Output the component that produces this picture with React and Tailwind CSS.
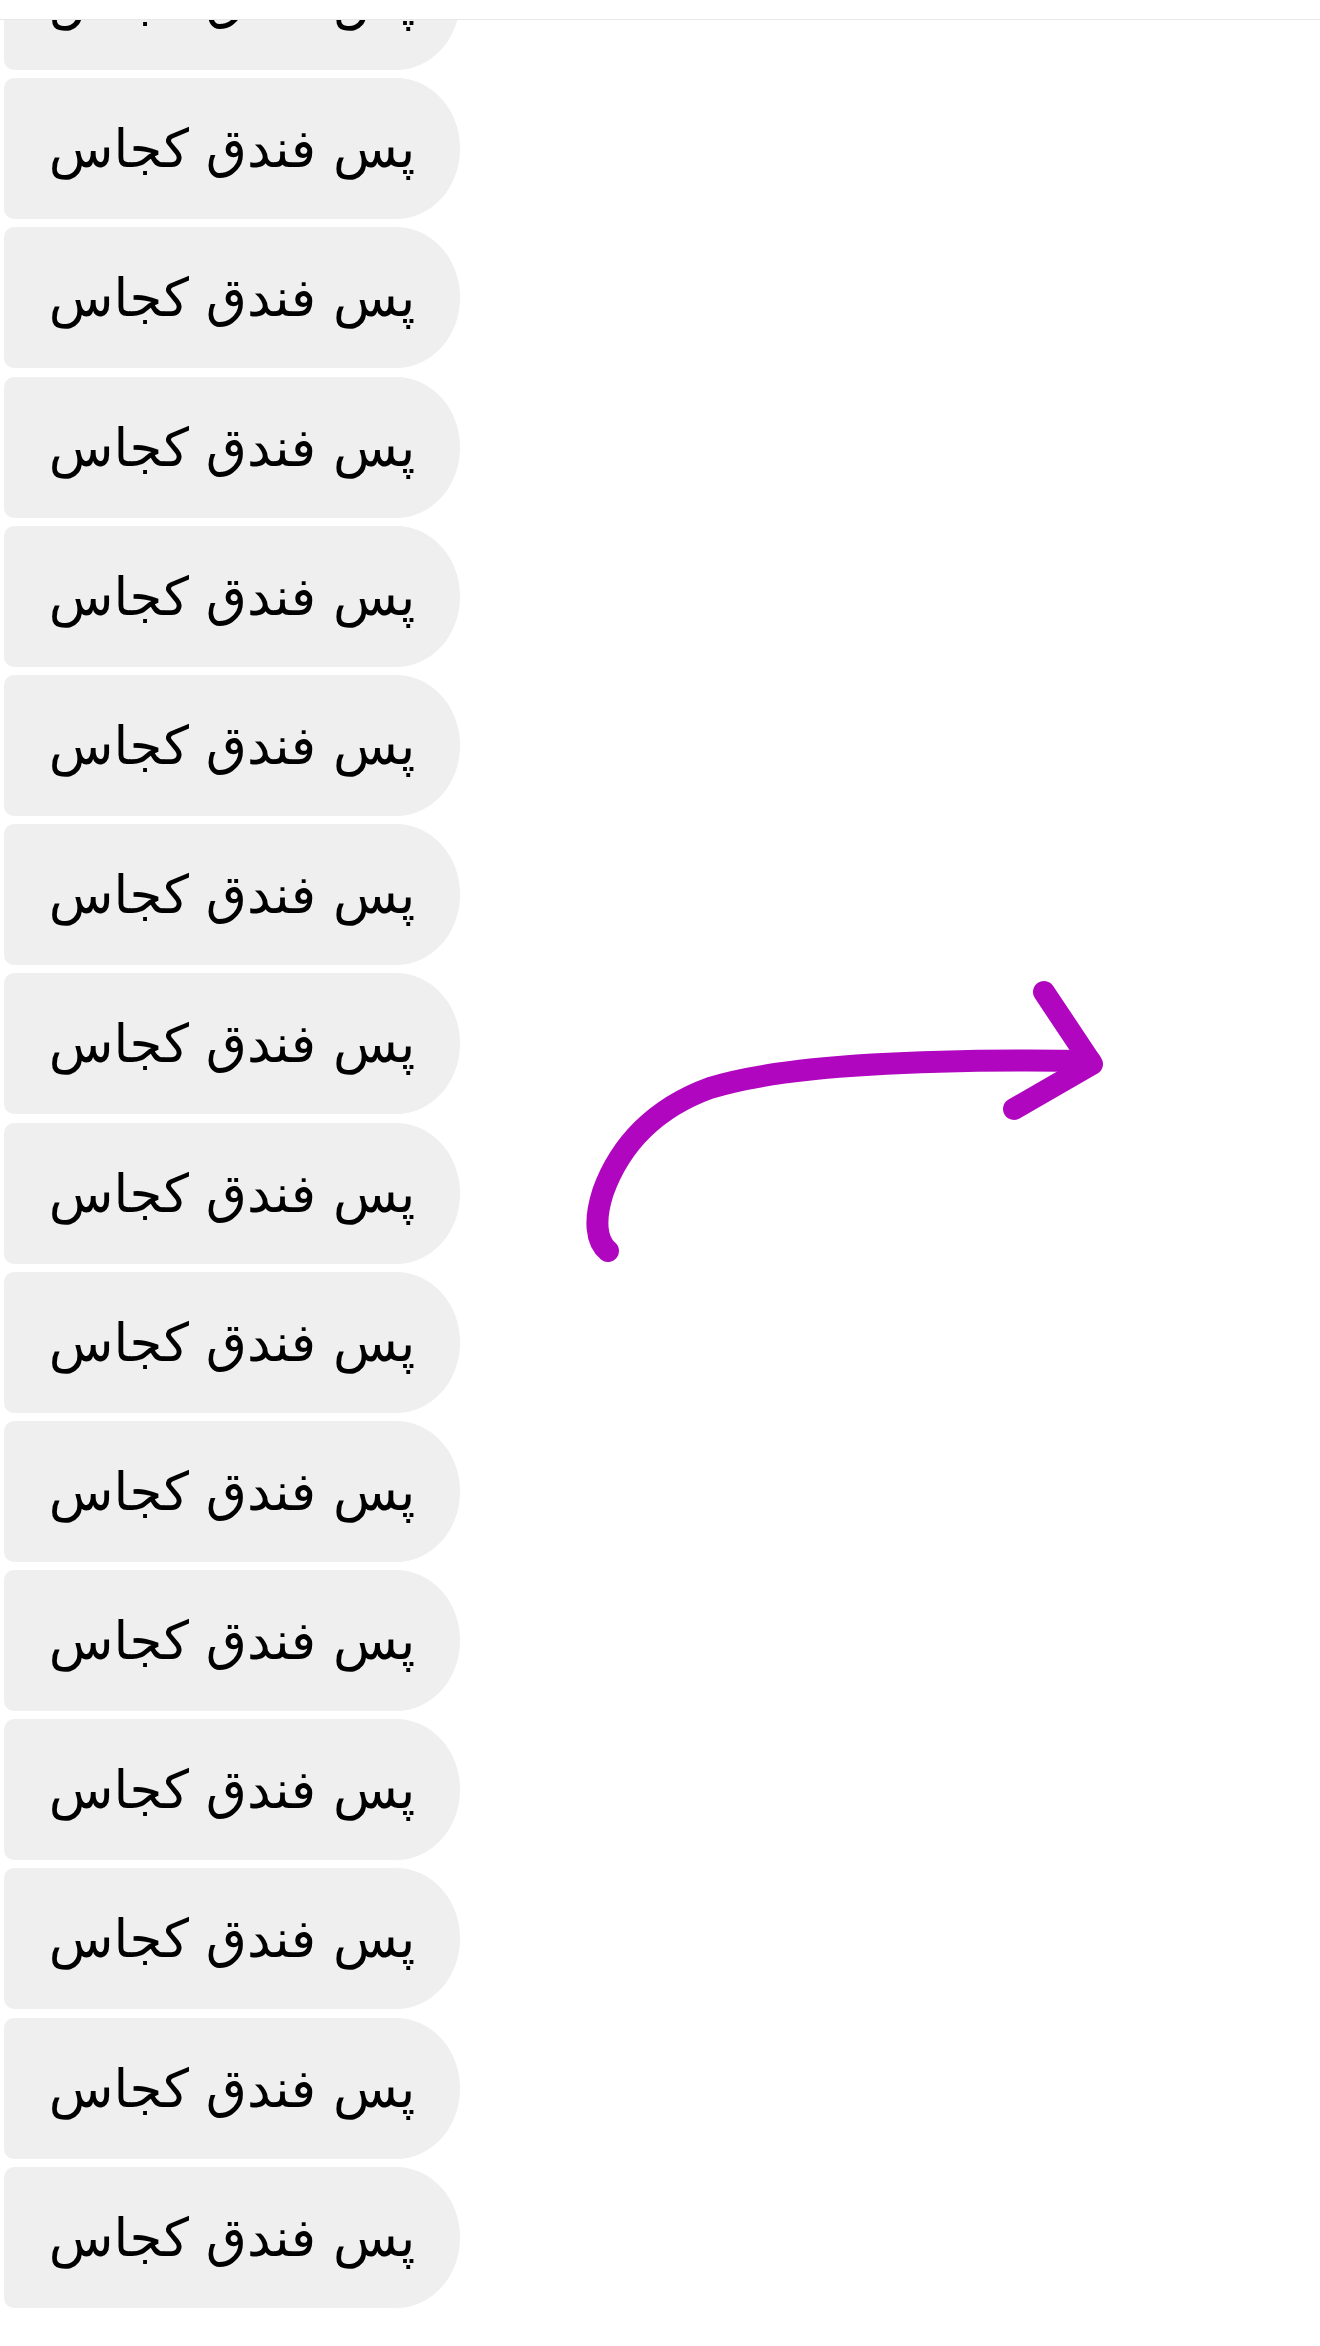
const items = Array.from({ length: 15 }, (_, i) => i);

function Bubble({ children }) {
  return (
    <div className="h-[141px] w-[456px] shrink-0 bg-[#efefef] rounded-l-[10px] rounded-tr-[64px_70px] rounded-br-[64px_70px] flex items-center justify-center">
      <span dir="rtl" className="text-[53px] leading-none text-black">
        {children}
      </span>
    </div>
  );
}

export default function App() {
  return (
    <div
      className="relative w-[1320px] h-[2346px] bg-white overflow-hidden"
      style={{ fontFamily: '"DejaVu Sans", "Noto Sans", sans-serif' }}
    >
      <div className="h-[20px] border-b border-[#e8e8e8]" />
      <div className="pl-[4px] flex flex-col gap-[8.2px]">
        <div className="h-[50px] overflow-hidden flex flex-col justify-end">
          <Bubble>پس فندق کجاس</Bubble>
        </div>
        {items.map((i) => (
          <Bubble key={i}>پس فندق کجاس</Bubble>
        ))}
      </div>

      {/* hand drawn arrow */}
      <svg
        className="absolute left-0 top-0 pointer-events-none"
        width="1320"
        height="2346"
        viewBox="0 0 1320 2346"
        fill="none"
      >
        <path
          d="M 608 1251 C 596 1241 594 1220 603 1192 C 620 1145 655 1108 710 1088 C 790 1063 950 1059 1090 1061"
          stroke="#b006bf"
          strokeWidth="22"
          strokeLinecap="round"
          strokeLinejoin="round"
        />
        <path
          d="M 1044 992 L 1092 1064 L 1014 1109"
          stroke="#b006bf"
          strokeWidth="22"
          strokeLinecap="round"
          strokeLinejoin="round"
        />
      </svg>
    </div>
  );
}
